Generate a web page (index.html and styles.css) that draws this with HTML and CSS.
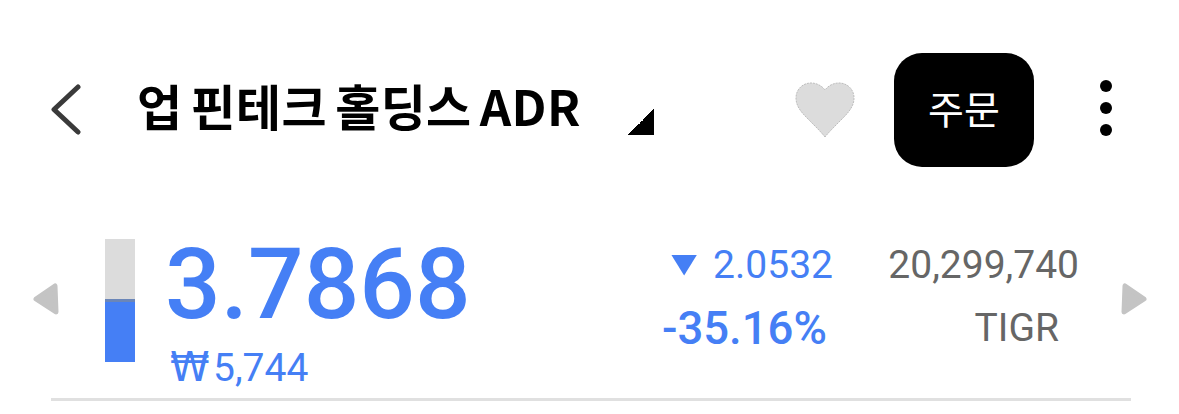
FILE: index.html
```html
<!DOCTYPE html>
<html lang="ko">
<head>
<meta charset="utf-8">
<title>업 핀테크 홀딩스 ADR</title>
<link rel="stylesheet" href="styles.css">
</head>
<body>
<header class="top">
  <button class="back" aria-label="뒤로">
    <svg width="32" height="52" viewBox="0 0 32 52"><path d="M28 3 L4 25.5 L28 48" fill="none" stroke="#3a3a3a" stroke-width="5" stroke-linecap="round" stroke-linejoin="round"/></svg>
  </button>
  <div class="name">
    <h1 class="title">업 핀테크 홀딩스 ADR</h1>
    <span class="corner"></span>
  </div>
  <svg class="heart" width="60" height="56" viewBox="-1 -1 60 56"><path d="M29 54 C26 50 20 44 12 36 C5 29 0 23 0 15 C0 6 7 0 15 0 C21 0 26 3 29 7 C32 3 37 0 43 0 C51 0 58 6 58 15 C58 23 53 29 46 36 C38 44 32 50 29 54 Z" fill="#dcdcdc" stroke="#bdbdbd" stroke-width="1" stroke-dasharray="2 1"/></svg>
  <button class="order">주문</button>
  <div class="more"><i></i><i></i><i></i></div>
</header>
<section class="quote">
  <svg class="arrow" width="26" height="32" viewBox="0 0 26 32"><path d="M3 16 L22 3 L23 29 Z" fill="#c4c4c4" stroke="#c4c4c4" stroke-width="5" stroke-linejoin="round"/></svg>
  <div class="gauge"><div class="gauge-fill"></div></div>
  <div class="price">
    <div class="last">3.7868</div>
    <div class="krw"><span class="won">₩</span><span class="krw-num">5,744</span></div>
  </div>
  <div class="change">
    <div class="delta"><span class="down"></span>2.0532</div>
    <div class="pct">-35.16%</div>
  </div>
  <div class="meta">
    <div class="volume">20,299,740</div>
    <div class="ticker">TIGR</div>
  </div>
  <svg class="arrow arrow-next" width="26" height="32" viewBox="0 0 26 32"><path d="M23 16 L4 3 L3 29 Z" fill="#c4c4c4" stroke="#c4c4c4" stroke-width="5" stroke-linejoin="round"/></svg>
</section>
<div class="rule"></div>
</body>
</html>
```
FILE: styles.css
```css
* { box-sizing: border-box; }
html, body { margin: 0; background: #fff; }
body { width: 1179px; height: 414px; overflow: hidden; font-family: Roboto, "Noto Sans CJK KR", sans-serif; }
button { border: 0; padding: 0; background: none; font: inherit; }

.top { display: flex; align-items: center; height: 114px; margin-top: 53px; padding-left: 50px; }
.back { display: flex; width: 32px; height: 52px; margin-right: 55px; }
.name { display: flex; align-items: flex-end; justify-content: space-between; width: 517px; height: 60px; margin-top: -10px; }
.title { margin: 0; font: 700 49px/60px "Noto Sans CJK KR", sans-serif; letter-spacing: 0.4px; word-spacing: -6px; color: #000; white-space: nowrap; }
.corner { width: 26px; height: 26px; background: linear-gradient(135deg, transparent 50%, #000 50%); }
.heart { margin-left: 141px; }
.order { width: 140px; height: 114px; margin-left: 39px; padding-bottom: 6px; border-radius: 28px; background: #000; color: #fff; font: 400 39px/1 "Noto Sans CJK KR", sans-serif; }
.more { display: flex; flex-direction: column; gap: 10px; margin: -4px 0 0 66px; }
.more i { width: 12px; height: 12px; border-radius: 50%; background: #000; }

.quote { display: flex; align-items: flex-start; margin-top: 72px; padding-left: 33px; }
.arrow { margin-top: 44px; flex: none; }
.arrow-next { margin-left: 42px; }
.gauge { width: 30px; height: 123px; margin-left: 46px; background: #dcdcdc; display: flex; align-items: flex-end; }
.gauge-fill { width: 100%; height: 63px; background: #457ff5; border-top: 3px solid #6b86b8; }
.price { width: 441px; margin-left: 30px; color: #457ff5; }
.last { font: 500 98px/92px Roboto, sans-serif; }
.krw { display: flex; align-items: baseline; height: 46px; font: 400 39px/46px Roboto, sans-serif; margin: 14px 0 0 5px; }
.won { width: 43px; font: 400 40px/1 "DejaVu Sans", sans-serif; }
.change { width: 227px; color: #457ff5; display: flex; flex-direction: column; align-items: flex-end; }
.delta { display: flex; align-items: center; font: 400 39px/52px Roboto, sans-serif; }
.down { width: 26px; height: 21px; margin-right: 16px; background: #457ff5; clip-path: polygon(0 0, 100% 0, 50% 100%); }
.pct { font: 500 45.5px/56px Roboto, sans-serif; margin: 10px 6px 0 0; }
.meta { width: 246px; color: #666; font: 400 39px/52px Roboto, sans-serif; display: flex; flex-direction: column; }
.volume { text-align: right; }
.ticker { text-align: right; margin: 11px 20px 0 0; }
.rule { height: 3px; margin: 7px 48px 0 51px; background: #e0e0e0; }
```
